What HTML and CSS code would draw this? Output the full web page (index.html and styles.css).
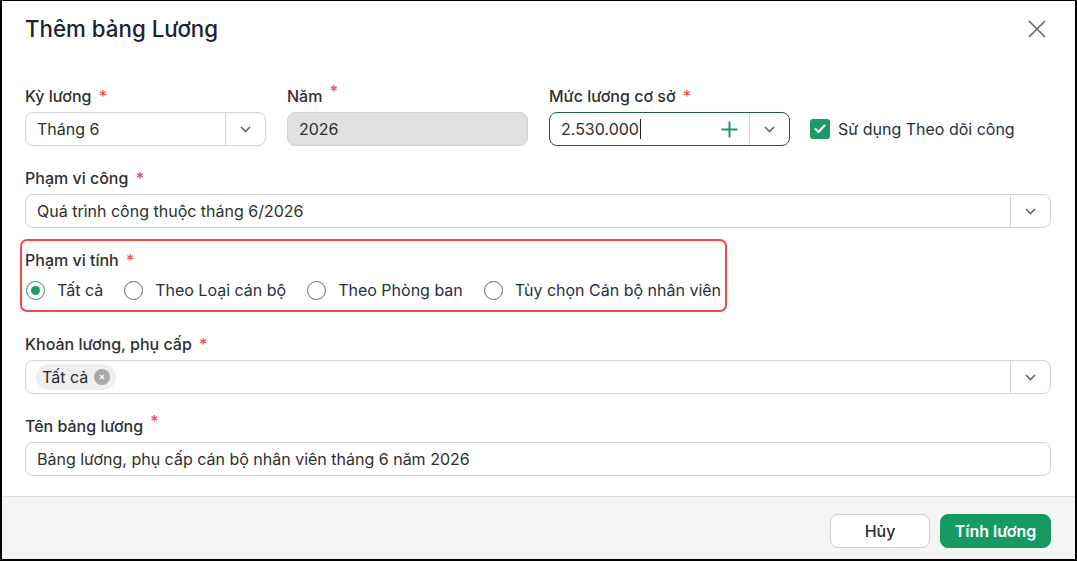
FILE: index.html
```html
<!DOCTYPE html>
<html lang="vi">
<head>
<meta charset="utf-8">
<title>Thêm bảng Lương</title>
<link rel="stylesheet" href="styles.css">
</head>
<body>
<div class="frame">
  <header class="dlg-header">
    <h1 class="dlg-title">Thêm bảng Lương</h1>
    <button class="close-btn" type="button" aria-label="Đóng">
      <svg width="18" height="18" viewBox="0 0 18 18"><path d="M1.5 1.5l15 15M16.5 1.5l-15 15" stroke="#6b6b6b" stroke-width="1.7" fill="none" stroke-linecap="round"/></svg>
    </button>
  </header>

  <main class="dlg-body">
    <div class="row-top">
      <div class="field col">
        <label class="lbl">Kỳ lương <span class="req">*</span></label>
        <div class="ctrl select">
          <span class="ctrl-text">Tháng 6</span>
          <span class="arrow"><svg width="11" height="7" viewBox="0 0 11 7"><path d="M1 1l4.5 4.5L10 1" stroke="#666" stroke-width="1.6" fill="none"/></svg></span>
        </div>
      </div>
      <div class="field col">
        <label class="lbl">Năm <span class="req sup">*</span></label>
        <div class="ctrl disabled"><span class="ctrl-text">2026</span></div>
      </div>
      <div class="field col">
        <label class="lbl">Mức lương cơ sở <span class="req">*</span></label>
        <div class="ctrl select focus">
          <span class="ctrl-text">2.530.000<span class="caret"></span></span>
          <span class="plus"><svg width="17" height="17" viewBox="0 0 17 17"><path d="M8.5 0.5v16M0.5 8.5h16" stroke="#1b9a63" stroke-width="2" fill="none"/></svg></span>
          <span class="arrow"><svg width="11" height="7" viewBox="0 0 11 7"><path d="M1 1l4.5 4.5L10 1" stroke="#666" stroke-width="1.6" fill="none"/></svg></span>
        </div>
      </div>
      <label class="check">
        <span class="check-box"><svg width="12" height="10" viewBox="0 0 12 10"><path d="M1.5 5l3 3 6-6.5" stroke="#fff" stroke-width="2.2" fill="none" stroke-linecap="round" stroke-linejoin="round"/></svg></span>
        <span class="check-text">Sử dụng Theo dõi công</span>
      </label>
    </div>

    <div class="field">
      <label class="lbl">Phạm vi công <span class="req">*</span></label>
      <div class="ctrl select">
        <span class="ctrl-text">Quá trình công thuộc tháng 6/2026</span>
        <span class="arrow"><svg width="11" height="7" viewBox="0 0 11 7"><path d="M1 1l4.5 4.5L10 1" stroke="#666" stroke-width="1.6" fill="none"/></svg></span>
      </div>
    </div>

    <div class="field highlight">
      <label class="lbl">Phạm vi tính <span class="req">*</span></label>
      <div class="radios">
        <label class="radio"><span class="dot checked"></span>Tất cả</label>
        <label class="radio"><span class="dot"></span>Theo Loại cán bộ</label>
        <label class="radio"><span class="dot"></span>Theo Phòng ban</label>
        <label class="radio"><span class="dot"></span>Tùy chọn Cán bộ nhân viên</label>
      </div>
    </div>

    <div class="field">
      <label class="lbl">Khoản lương, phụ cấp <span class="req">*</span></label>
      <div class="ctrl select">
        <span class="ctrl-tags">
          <span class="tag">Tất cả<span class="tag-x"><svg width="6" height="6" viewBox="0 0 6 6"><path d="M1 1l4 4M5 1L1 5" stroke="#fff" stroke-width="1.4"/></svg></span></span>
        </span>
        <span class="arrow"><svg width="11" height="7" viewBox="0 0 11 7"><path d="M1 1l4.5 4.5L10 1" stroke="#666" stroke-width="1.6" fill="none"/></svg></span>
      </div>
    </div>

    <div class="field">
      <label class="lbl">Tên bảng lương <span class="req sup">*</span></label>
      <div class="ctrl"><span class="ctrl-text">Bảng lương, phụ cấp cán bộ nhân viên tháng 6 năm 2026</span></div>
    </div>
  </main>

  <footer class="dlg-footer">
    <button class="btn btn-light" type="button">Hủy</button>
    <button class="btn btn-primary" type="button">Tính lương</button>
  </footer>
</div>
</body>
</html>
```

FILE: styles.css
```css
* { box-sizing: border-box; }

html, body {
  margin: 0;
  padding: 0;
  background: #fff;
}

body {
  font-family: Inter, "Noto Sans", "Liberation Sans", sans-serif;
  color: #2b2b2b;
}

.frame {
  width: 1077px;
  height: 561px;
  border: 1px solid #000;
  border-left-width: 2px;
  border-right-width: 2px;
  border-bottom-width: 2px;
  display: flex;
  flex-direction: column;
  background: #fff;
}

/* header */
.dlg-header {
  height: 56px;
  flex: none;
  display: flex;
  align-items: center;
  justify-content: space-between;
  padding: 0 29px 0 23px;
}

.dlg-title {
  margin: 0;
  font-size: 22.3px;
  line-height: 26px;
  font-weight: 500;
  color: #1c2333;
}

.close-btn {
  border: 0;
  background: none;
  padding: 0;
  width: 18px;
  height: 18px;
  display: flex;
}

/* body */
.dlg-body {
  flex: 1;
  padding: 29px 24px 0 23px;
  display: flex;
  flex-direction: column;
  gap: 22px;
}

.row-top {
  display: flex;
  align-items: flex-end;
  gap: 21px;
}

.col { width: 241px; flex: none; }

.field { display: flex; flex-direction: column; }

.lbl {
  font-size: 16px;
  line-height: 20px;
  font-weight: 500;
  color: #303030;
  margin-bottom: 6px;
}

.req { color: #f04b4b; margin-left: 3px; }
.req.sup { position: relative; top: -5px; }

.ctrl {
  height: 34px;
  border: 1px solid #d3d3d3;
  border-radius: 8px;
  display: flex;
  align-items: center;
  background: #fff;
  font-size: 16px;
  color: #2f2f2f;
}

.ctrl-text {
  flex: 1;
  padding: 0 11px;
  white-space: nowrap;
  display: flex;
  align-items: center;
}

.ctrl.disabled { background: #e0e0e0; }

.ctrl.focus { border-color: #1d5e45; }

.caret {
  display: inline-block;
  width: 1px;
  height: 20px;
  background: #222;
  margin-left: 1px;
}

.plus {
  width: 40px;
  height: 100%;
  display: flex;
  align-items: center;
  justify-content: center;
}

.arrow {
  width: 40px;
  height: 100%;
  border-left: 1px solid #d3d3d3;
  display: flex;
  align-items: center;
  justify-content: center;
  flex: none;
}

/* checkbox */
.check {
  display: flex;
  align-items: center;
  gap: 8px;
  height: 34px;
  margin-left: -1px;
  font-size: 16px;
  color: #2b3040;
}

.check-box {
  width: 20px;
  height: 20px;
  border-radius: 3px;
  background: #1b9a63;
  display: flex;
  align-items: center;
  justify-content: center;
}

/* radio group, outlined */
.highlight {
  align-self: flex-start;
  margin: -11px 0 0 -5px;
  padding: 9px 4px 6px 3px;
  border: 2px solid #f24848;
  border-radius: 7px;
}

.radios {
  display: flex;
  gap: 20px;
  height: 28px;
  align-items: center;
}

.radio {
  display: flex;
  align-items: center;
  gap: 12px;
  font-size: 16px;
  color: #2b3040;
  white-space: nowrap;
}

.dot {
  width: 19px;
  height: 19px;
  border: 1.5px solid #6b6b6b;
  border-radius: 50%;
  display: flex;
  align-items: center;
  justify-content: center;
  margin-left: 1px;
}

.dot.checked { border-color: #1b9a63; }
.dot.checked::after {
  content: "";
  width: 9px;
  height: 9px;
  border-radius: 50%;
  background: #1b9a63;
}

/* tags */
.ctrl-tags { flex: 1; padding: 0 10px; display: flex; }

.tag {
  display: inline-flex;
  align-items: center;
  gap: 6px;
  height: 26px;
  padding: 0 6px 0 6px;
  border-radius: 13px;
  background: #efefef;
  font-size: 16px;
  color: #2b2b2b;
}

.tag-x {
  width: 16px;
  height: 16px;
  border-radius: 50%;
  background: #a9a9a9;
  display: flex;
  align-items: center;
  justify-content: center;
}

/* footer */
.dlg-footer {
  height: 63px;
  flex: none;
  border-top: 1px solid #dedede;
  background: #f4f4f4;
  display: flex;
  justify-content: flex-end;
  align-items: flex-start;
  gap: 10px;
  padding: 17px 24px 0 0;
}

.btn {
  height: 34px;
  border-radius: 8px;
  font-family: inherit;
  font-size: 16px;
  font-weight: 500;
  padding: 0;
}

.btn-light {
  width: 100px;
  background: #fff;
  border: 1px solid #d0d0d0;
  color: #2b2b2b;
}

.btn-primary {
  width: 111px;
  background: #169a64;
  border: 1px solid #169a64;
  color: #fff;
  font-weight: 600;
}
```
